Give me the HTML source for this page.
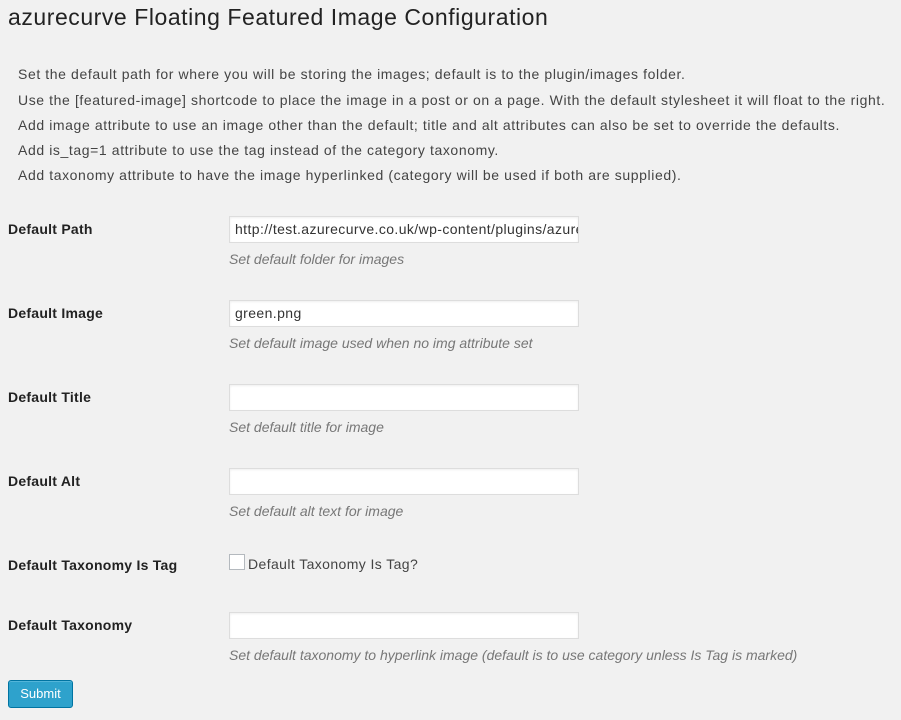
<!DOCTYPE html>
<html><head><meta charset="utf-8"><style>
body{margin:0;background:#f1f1f1;font-family:"Liberation Sans",sans-serif;color:#222;width:901px;height:720px;overflow:hidden;position:relative}
.a{position:absolute;white-space:nowrap}
h1{position:absolute;left:8px;top:4px;margin:0;font-weight:400;font-size:23px;color:#222;letter-spacing:0.55px}
.p{font-size:14px;color:#444;letter-spacing:0.6px;left:18px}
.l{font-size:14px;font-weight:bold;left:8px;letter-spacing:0.25px;color:#222}
.in{position:absolute;left:229px;background:#fff;border:1px solid #ddd;box-shadow:inset 0 1px 2px rgba(0,0,0,.07);font-size:14px;line-height:25px;padding-left:5px;box-sizing:border-box;width:350px;height:27px;color:#333;overflow:hidden;white-space:nowrap;letter-spacing:0.4px}
.d{font-size:14px;font-style:italic;color:#777;left:229px;letter-spacing:0px}
</style></head><body>
<h1>azurecurve Floating Featured Image Configuration</h1>
<div class="a p" style="top:66px">Set the default path for where you will be storing the images; default is to the plugin/images folder.</div>
<div class="a p" style="top:92px">Use the [featured-image] shortcode to place the image in a post or on a page. With the default stylesheet it will float to the right.</div>
<div class="a p" style="top:117px">Add image attribute to use an image other than the default; title and alt attributes can also be set to override the defaults.</div>
<div class="a p" style="top:142px">Add is_tag=1 attribute to use the tag instead of the category taxonomy.</div>
<div class="a p" style="top:167px">Add taxonomy attribute to have the image hyperlinked (category will be used if both are supplied).</div>

<div class="a l" style="top:221px">Default Path</div>
<div class="in" style="top:216px">http://test.azurecurve.co.uk/wp-content/plugins/azurecurve-floating-featured-image/images</div>
<div class="a d" style="top:251px">Set default folder for images</div>

<div class="a l" style="top:305px">Default Image</div>
<div class="in" style="top:300px">green.png</div>
<div class="a d" style="top:335px">Set default image used when no img attribute set</div>

<div class="a l" style="top:389px">Default Title</div>
<div class="in" style="top:384px"></div>
<div class="a d" style="top:419px">Set default title for image</div>

<div class="a l" style="top:473px">Default Alt</div>
<div class="in" style="top:468px"></div>
<div class="a d" style="top:503px">Set default alt text for image</div>

<div class="a l" style="top:557px">Default Taxonomy Is Tag</div>
<div class="a" style="left:229px;top:554px;width:14px;height:14px;background:#fff;border:1px solid #b4b9be"></div>
<div class="a" style="left:248px;top:556px;font-size:14px;color:#444;letter-spacing:0.4px">Default Taxonomy Is Tag?</div>

<div class="a l" style="top:617px">Default Taxonomy</div>
<div class="in" style="top:612px"></div>
<div class="a d" style="top:647px">Set default taxonomy to hyperlink image (default is to use category unless Is Tag is marked)</div>

<div class="a" style="left:8px;top:680px;width:65px;height:28px;box-sizing:border-box;background:#2ea2cc;border:1px solid #0074a2;border-radius:3px;color:#fff;font-size:13px;text-align:center;line-height:25px;box-shadow:inset 0 1px 0 rgba(120,200,230,.5)">Submit</div>
</body></html>
